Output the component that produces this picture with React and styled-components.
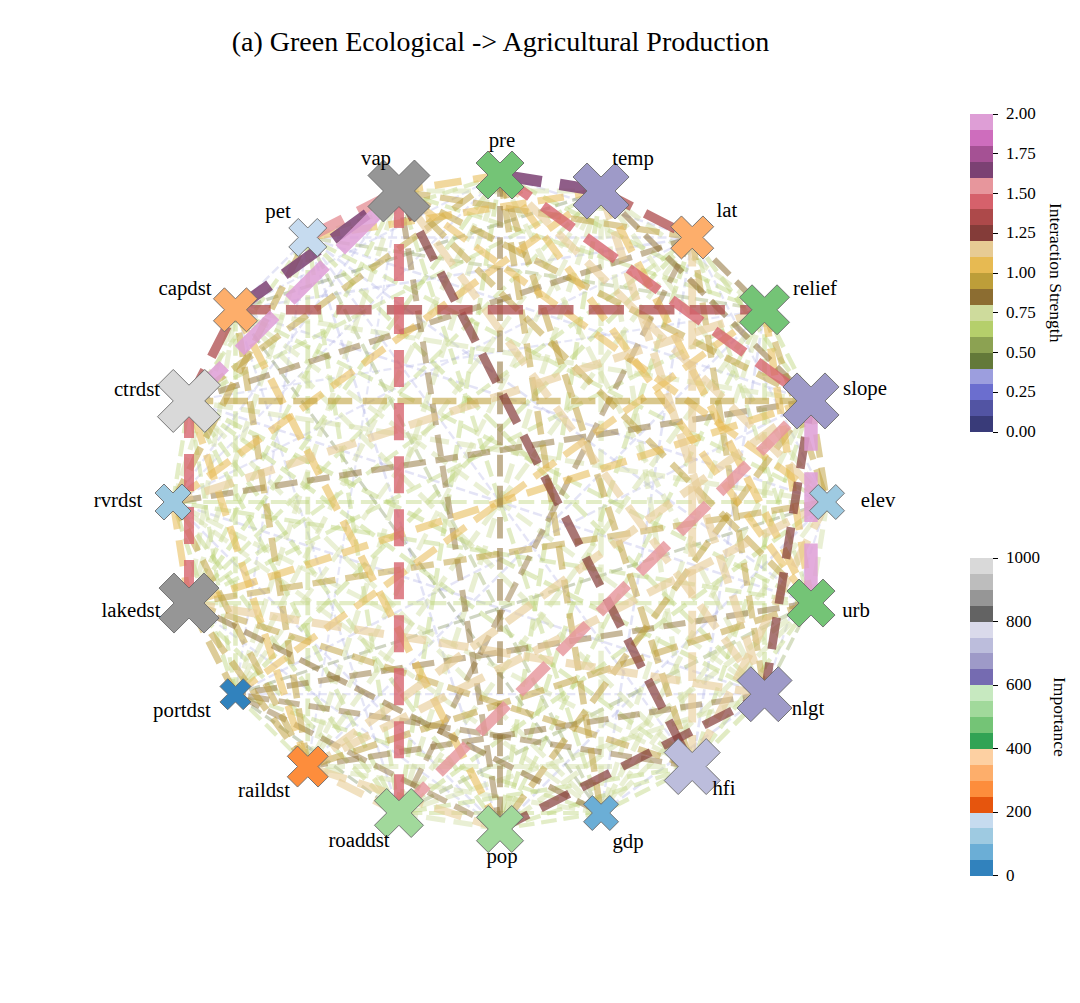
import React from 'react';
import styled, { createGlobalStyle } from 'styled-components';

const TAB20B = ['#393b79','#5254a3','#6b6ecf','#9c9ede','#637939','#8ca252','#b5cf6b','#cedb9c','#8c6d31','#bd9e39','#e7ba52','#e7cb94','#843c39','#ad494a','#d6616b','#e7969c','#7b4173','#a55194','#ce6dbd','#de9ed6'];
const TAB20C = ['#3182bd','#6baed6','#9ecae1','#c6dbef','#e6550d','#fd8d3c','#fdae6b','#fdd0a2','#31a354','#74c476','#a1d99b','#c7e9c0','#756bb1','#9e9ac8','#bcbddc','#dadaeb','#636363','#969696','#bdbdbd','#d9d9d9'];

const CX = 500;
const CY = 502;
const R = 327;

const NODES = [
  { id: 'pre', a: 90, h: 24, c: '#74c476', lx: 502, ly: 147 },
  { id: 'temp', a: 72, h: 28, c: '#9e9ac8', lx: 633, ly: 165 },
  { id: 'lat', a: 54, h: 21.5, c: '#fdae6b', lx: 727, ly: 217 },
  { id: 'relief', a: 36, h: 25, c: '#74c476', lx: 815, ly: 295 },
  { id: 'slope', a: 18, h: 28, c: '#9e9ac8', lx: 865, ly: 395 },
  { id: 'elev', a: 0, h: 17.5, c: '#9ecae1', lx: 878, ly: 507 },
  { id: 'urb', a: -18, h: 24, c: '#74c476', lx: 856, ly: 617 },
  { id: 'nlgt', a: -36, h: 27.5, c: '#9e9ac8', lx: 808, ly: 715 },
  { id: 'hfi', a: -54, h: 28, c: '#bcbddc', lx: 724, ly: 795 },
  { id: 'gdp', a: -72, h: 17.5, c: '#6baed6', lx: 628, ly: 848 },
  { id: 'pop', a: -90, h: 23.5, c: '#a1d99b', lx: 502, ly: 863 },
  { id: 'roaddst', a: -108, h: 24.5, c: '#a1d99b', lx: 359, ly: 847 },
  { id: 'raildst', a: -126, h: 20.5, c: '#fd8d3c', lx: 264, ly: 797 },
  { id: 'portdst', a: -144, h: 15.5, c: '#3182bd', lx: 182, ly: 717 },
  { id: 'lakedst', a: -162, h: 30, c: '#969696', lx: 131, ly: 617 },
  { id: 'rvrdst', a: 180, h: 18, c: '#9ecae1', lx: 118, ly: 507 },
  { id: 'ctrdst', a: 162, h: 31.5, c: '#d9d9d9', lx: 137, ly: 396 },
  { id: 'capdst', a: 144, h: 22, c: '#fdae6b', lx: 185, ly: 295 },
  { id: 'pet', a: 126, h: 19, c: '#c6dbef', lx: 278, ly: 218 },
  { id: 'vap', a: 108, h: 31, c: '#969696', lx: 376, ly: 165 },
].map((n) => ({
  ...n,
  x: CX + R * Math.cos((n.a * Math.PI) / 180),
  y: CY - R * Math.sin((n.a * Math.PI) / 180),
}));

const SPECIAL = [
  ['vap', 'roaddst', 1.45],
  ['capdst', 'relief', 1.38],
  ['ctrdst', 'slope', 0.95],
  ['pre', 'pop', 0.85],
  ['vap', 'hfi', 1.25],
  ['pop', 'nlgt', 1.25],
  ['nlgt', 'slope', 1.25],
  ['slope', 'urb', 1.95],
  ['ctrdst', 'vap', 1.95],
  ['capdst', 'vap', 1.65],
  ['pre', 'temp', 1.65],
  ['pre', 'slope', 1.45],
  ['temp', 'lat', 1.35],
  ['temp', 'slope', 0.85],
  ['lat', 'relief', 0.85],
  ['roaddst', 'slope', 1.55],
  ['ctrdst', 'lakedst', 1.45],
  ['ctrdst', 'capdst', 1.35],
  ['pet', 'vap', 1.55],
  ['lakedst', 'gdp', 0.85],
];

function mulberry32(a) {
  return function () {
    a |= 0;
    a = (a + 0x6d2b79f5) | 0;
    let t = Math.imul(a ^ (a >>> 15), 1 | a);
    t = (t + Math.imul(t ^ (t >>> 7), 61 | t)) ^ t;
    return ((t ^ (t >>> 14)) >>> 0) / 4294967296;
  };
}

function buildEdges() {
  const byId = Object.fromEntries(NODES.map((n) => [n.id, n]));
  const specialMap = {};
  SPECIAL.forEach(([a, b, s]) => {
    specialMap[[a, b].sort().join('|')] = { a, b, s };
  });
  const rand = mulberry32(20240611);
  const edges = [];
  for (let i = 0; i < NODES.length; i++) {
    for (let j = i + 1; j < NODES.length; j++) {
      const key = [NODES[i].id, NODES[j].id].sort().join('|');
      const r = rand();
      const r2 = rand();
      if (specialMap[key]) {
        const { a, b, s } = specialMap[key];
        edges.push({ from: byId[a], to: byId[b], s, special: true });
        continue;
      }
      let s;
      if (r < 0.17) s = 0.3 + r2 * 0.09;
      else if (r < 0.6) s = 0.6 + r2 * 0.19;
      else if (r < 0.66) s = 0.45 + r2 * 0.14;
      else if (r < 0.87) s = 1.0 + r2 * 0.19;
      else if (r < 0.94) s = 0.9 + r2 * 0.09;
      else s = 0.8 + r2 * 0.09;
      edges.push({ from: NODES[i], to: NODES[j], s, special: false });
    }
  }
  return edges.sort((p, q) => (p.special === q.special ? p.s - q.s : p.special ? 1 : -1));
}

const EDGES = buildEdges();

function xMarker(cx, cy, h) {
  const k = (h * Math.SQRT2) / 4;
  const pts = [[-1, -3], [-1, -1], [-3, -1], [-3, 1], [-1, 1], [-1, 3], [1, 3], [1, 1], [3, 1], [3, -1], [1, -1], [1, -3]];
  return pts
    .map(([x, y]) => {
      const rx = ((x - y) / Math.SQRT2) * k;
      const ry = ((x + y) / Math.SQRT2) * k;
      return `${(cx + rx).toFixed(2)},${(cy + ry).toFixed(2)}`;
    })
    .join(' ');
}

const GlobalStyle = createGlobalStyle`
  html, body {
    margin: 0;
    padding: 0;
    background: #ffffff;
  }
  body {
    font-family: 'Liberation Serif', 'Times New Roman', serif;
    color: #000;
  }
`;

const Figure = styled.div`
  width: 1080px;
  height: 1003px;
  display: flex;
  background: #ffffff;
  overflow: hidden;
`;

const ChartColumn = styled.div`
  width: 940px;
  display: flex;
  flex-direction: column;
`;

const Title = styled.h1`
  margin: 0;
  padding: 26px 0 0 61px;
  font-family: 'Liberation Serif', 'Times New Roman', serif;
  font-size: 28px;
  line-height: 32px;
  font-weight: 400;
  text-align: center;
  color: #000;
`;

const Graph = styled.svg`
  display: block;
  width: 940px;
  height: 945px;
`;

const EdgeLine = styled.line`
  stroke-linecap: butt;
  fill: none;
`;

const NodeMark = styled.polygon`
  stroke: #6a6a6a;
  stroke-width: 0.9;
  stroke-linejoin: miter;
`;

const NodeLabel = styled.text`
  font-family: 'Liberation Serif', 'Times New Roman', serif;
  font-size: 20.8px;
  fill: #000;
  text-anchor: middle;
`;

const Sidebar = styled.div`
  display: flex;
  flex-direction: column;
  gap: 126px;
  padding: 114px 0 0 30px;
`;

const ColorbarRow = styled.div`
  display: flex;
  height: 318px;
`;

const Bar = styled.div`
  width: 23px;
  display: flex;
  flex-direction: column;
`;

const Swatch = styled.div`
  flex: 1;
  background: ${(p) => p.$color};
`;

const TickColumn = styled.div`
  display: flex;
  flex-direction: column;
  justify-content: space-between;
`;

const Tick = styled.div`
  height: 0;
  display: flex;
  align-items: center;
`;

const TickMark = styled.span`
  width: 5px;
  height: 1px;
  background: #000;
  flex: none;
`;

const TickLabel = styled.span`
  margin-left: 8px;
  font-family: 'Liberation Serif', 'Times New Roman', serif;
  font-size: 17px;
  line-height: 20px;
  color: #000;
  white-space: nowrap;
`;

const AxisLabel = styled.div`
  writing-mode: vertical-rl;
  align-self: center;
  margin-left: 10px;
  font-family: 'Liberation Serif', 'Times New Roman', serif;
  font-size: 17.5px;
  line-height: 20px;
  color: #000;
  white-space: nowrap;
`;

function Colorbar({ colors, ticks, label }) {
  return (
    <ColorbarRow>
      <Bar>
        {[...colors].reverse().map((c, i) => (
          <Swatch key={i} $color={c} />
        ))}
      </Bar>
      <TickColumn>
        {ticks.map((t) => (
          <Tick key={t}>
            <TickMark />
            <TickLabel>{t}</TickLabel>
          </Tick>
        ))}
      </TickColumn>
      <AxisLabel>{label}</AxisLabel>
    </ColorbarRow>
  );
}

function NetworkGraph() {
  return (
    <Graph viewBox="0 58 940 945" xmlns="http://www.w3.org/2000/svg">
      <g>
        {EDGES.map((e, i) => {
          const w = 6.9 * e.s;
          const color = TAB20B[Math.min(19, Math.floor(e.s * 10))];
          const alpha = e.special
            ? Math.min(0.85, 0.2 + 0.4 * e.s)
            : Math.min(0.85, 0.12 + 0.42 * e.s);
          return (
            <EdgeLine
              key={i}
              x1={e.from.x}
              y1={e.from.y}
              x2={e.to.x}
              y2={e.to.y}
              stroke={color}
              strokeOpacity={alpha}
              strokeWidth={w}
              strokeDasharray={`${(3.7 * w).toFixed(2)} ${(1.6 * w).toFixed(2)}`}
            />
          );
        })}
      </g>
      <g>
        {NODES.map((n) => (
          <NodeMark key={n.id} points={xMarker(n.x, n.y, n.h)} fill={n.c} />
        ))}
      </g>
      <g>
        {NODES.map((n) => (
          <NodeLabel key={n.id} x={n.lx} y={n.ly}>
            {n.id}
          </NodeLabel>
        ))}
      </g>
    </Graph>
  );
}

export default function App() {
  return (
    <>
      <GlobalStyle />
      <Figure>
        <ChartColumn>
          <Title>(a) Green Ecological -&gt; Agricultural Production</Title>
          <NetworkGraph />
        </ChartColumn>
        <Sidebar>
          <Colorbar
            colors={TAB20B}
            ticks={['2.00', '1.75', '1.50', '1.25', '1.00', '0.75', '0.50', '0.25', '0.00']}
            label="Interaction Strength"
          />
          <Colorbar
            colors={TAB20C}
            ticks={['1000', '800', '600', '400', '200', '0']}
            label="Importance"
          />
        </Sidebar>
      </Figure>
    </>
  );
}
